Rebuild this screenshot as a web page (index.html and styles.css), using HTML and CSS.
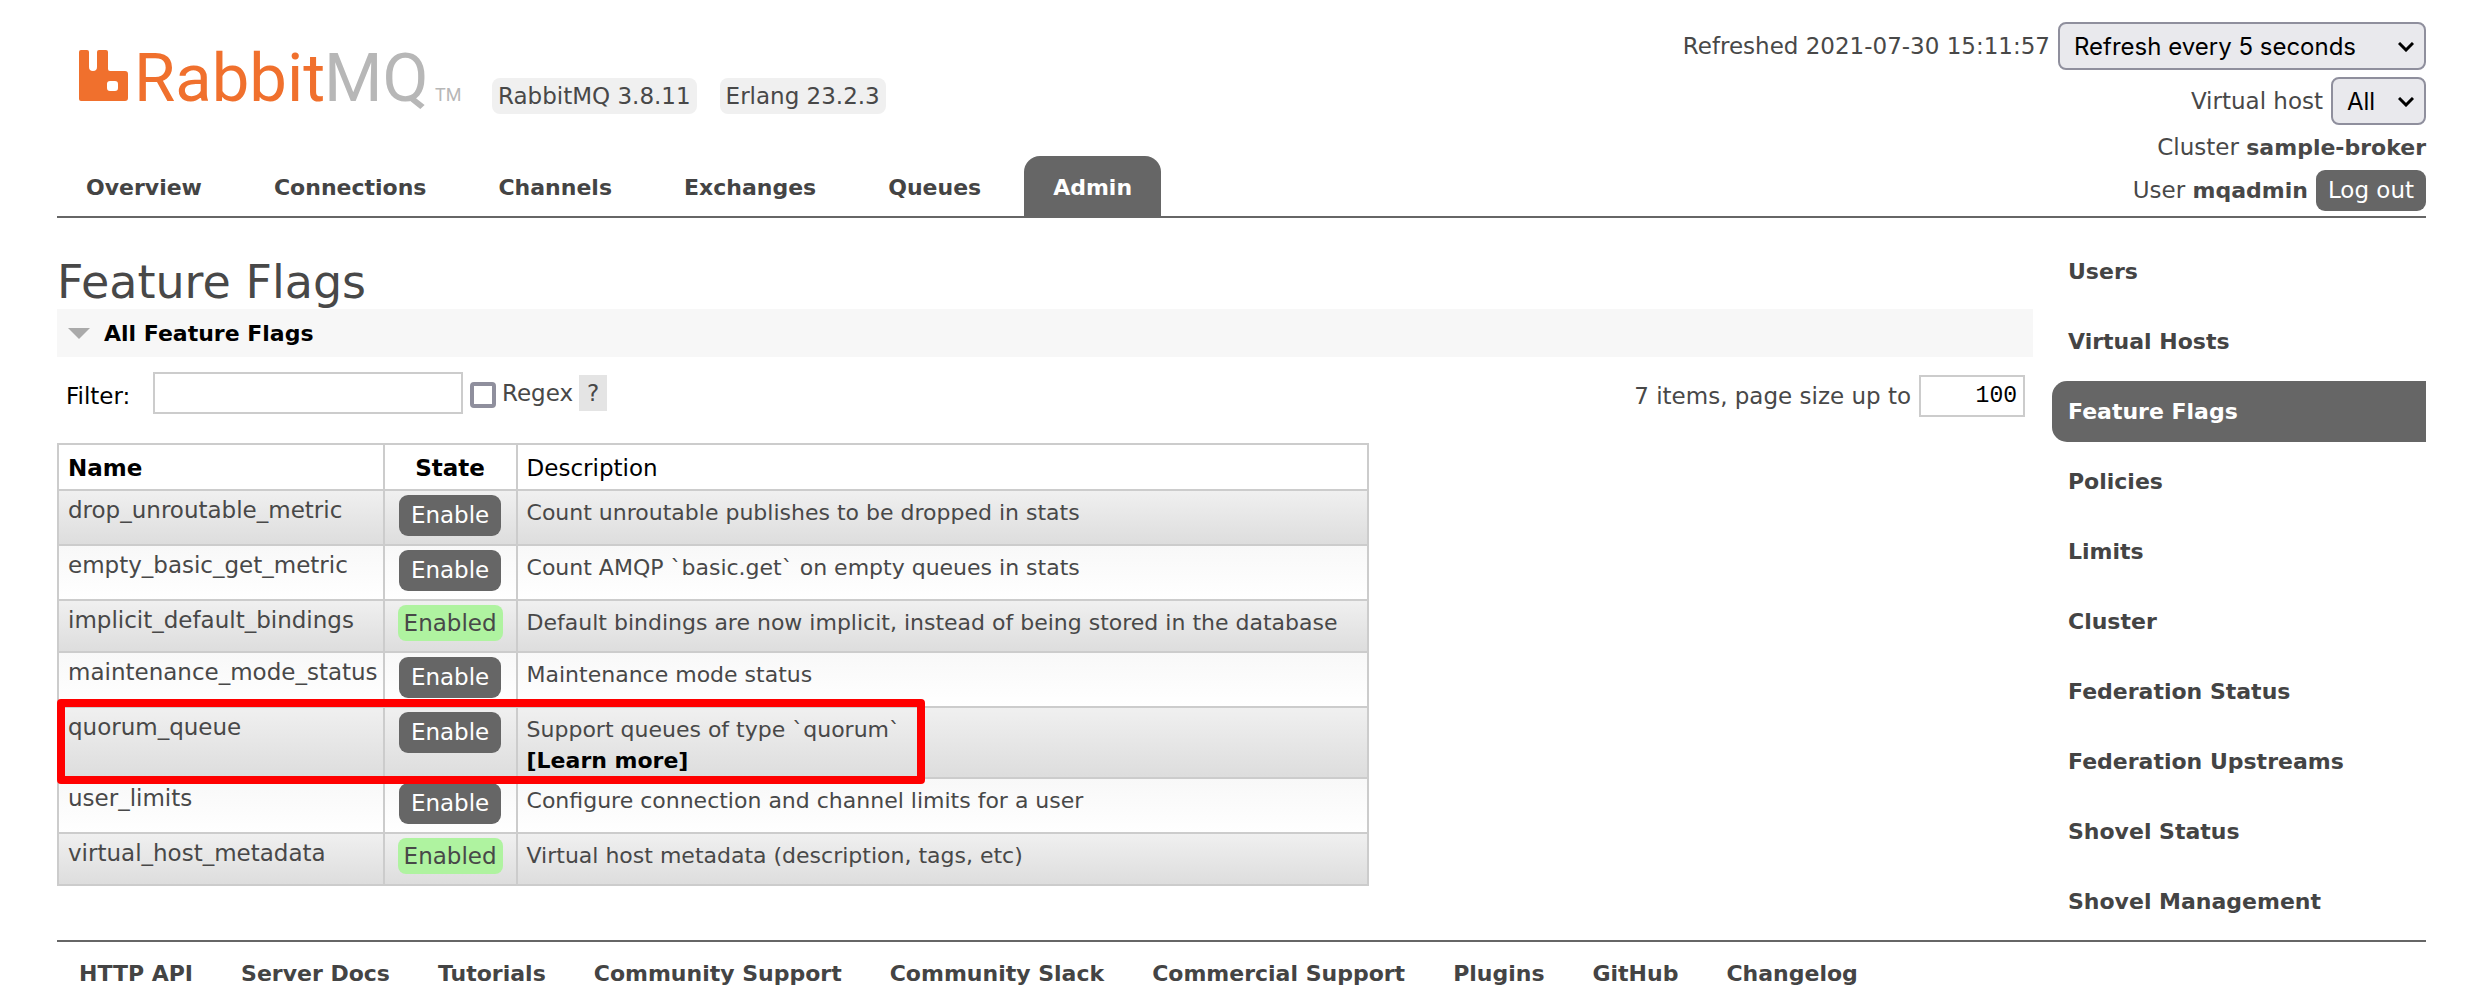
FILE: index.html
```
<!DOCTYPE html>
<html lang="en">
<head>
<meta charset="utf-8">
<meta name="viewport" content="width=device-width, initial-scale=1">
<title>RabbitMQ Management</title>
<link rel="stylesheet" href="styles.css">
</head>
<body>
<header class="header">
  <div class="header-left">
    <div class="brand">
      <a class="logo" href="#" aria-label="RabbitMQ">
        <svg width="386" height="80" viewBox="0 -8 386 80">
          <path fill="#f0702d" fill-rule="evenodd" d="M3 4h6q2 0 2 2v15q0 4 4 4q4 0 4-4V6q0-2 2-2h7q2 0 2 2v17q0 2 2 2h15q3 0 3 3v24q0 3-3 3H3q-2 0-2-2V6q0-2 2-2zM32 35q-3 0-3 3v4q0 3 3 3h5q3 0 3-3v-4q0-3-3-3z"/>
          <text class="logo-name" x="56" y="55">Rabbit</text>
          <text class="logo-name logo-mq" x="246" y="55">MQ</text>
          <text class="logo-tm" x="357" y="55">TM</text>
        </svg>
      </a>
      <span class="badge">RabbitMQ 3.8.11</span>
      <span class="badge">Erlang 23.2.3</span>
    </div>
    <nav class="tabs">
      <a class="tab" href="#">Overview</a>
      <a class="tab" href="#">Connections</a>
      <a class="tab" href="#">Channels</a>
      <a class="tab" href="#">Exchanges</a>
      <a class="tab" href="#">Queues</a>
      <a class="tab tab-current" href="#">Admin</a>
    </nav>
  </div>
  <div class="status">
    <div class="status-row">
      <label for="refresh">Refreshed 2021-07-30 15:11:57</label>
      <span class="picker picker-wide">
        <select id="refresh"><option>Refresh every 5 seconds</option></select>
        <svg class="chevron" width="16" height="10" viewBox="0 0 16 10"><path d="M1 1l7 7 7-7"/></svg>
      </span>
    </div>
    <div class="status-row">
      <label for="vhost">Virtual host</label>
      <span class="picker">
        <select id="vhost"><option>All</option></select>
        <svg class="chevron" width="16" height="10" viewBox="0 0 16 10"><path d="M1 1l7 7 7-7"/></svg>
      </span>
    </div>
    <div class="status-row status-cluster"><span>Cluster <b>sample-broker</b></span></div>
    <div class="status-row"><span>User <b>mqadmin</b></span><button class="button logout" type="button">Log out</button></div>
  </div>
</header>

<div class="body">
  <main class="main">
    <h1>Feature Flags</h1>
    <h2><svg width="22" height="11" viewBox="0 0 22 11"><path fill="#aaa" d="M0 0h22L11 11z"/></svg>All Feature Flags</h2>
    <div class="filter">
      <label class="filter-label" for="filter">Filter:</label>
      <input class="filter-input" id="filter" type="text">
      <input class="check" id="regex" type="checkbox">
      <label for="regex">Regex</label>
      <button class="help" type="button">?</button>
      <div class="paging">
        <label for="page-size">7 items, page size up to</label>
        <input class="page-size" id="page-size" type="text" value="100">
      </div>
    </div>
    <table class="flags">
      <thead>
        <tr><th>Name</th><th class="state">State</th><th class="plain">Description</th></tr>
      </thead>
      <tbody>
        <tr><td>drop_unroutable_metric</td><td class="state"><button class="button" type="button">Enable</button></td><td class="desc">Count unroutable publishes to be dropped in stats</td></tr>
        <tr><td>empty_basic_get_metric</td><td class="state"><button class="button" type="button">Enable</button></td><td class="desc">Count AMQP `basic.get` on empty queues in stats</td></tr>
        <tr><td>implicit_default_bindings</td><td class="state"><span class="badge badge-on">Enabled</span></td><td class="desc">Default bindings are now implicit, instead of being stored in the database</td></tr>
        <tr><td>maintenance_mode_status</td><td class="state"><button class="button" type="button">Enable</button></td><td class="desc">Maintenance mode status</td></tr>
        <tr class="marked"><td>quorum_queue<span class="marker"></span></td><td class="state"><button class="button" type="button">Enable</button></td><td class="desc">Support queues of type `quorum`<br><a class="learn" href="#">[Learn more]</a></td></tr>
        <tr><td>user_limits</td><td class="state"><button class="button" type="button">Enable</button></td><td class="desc">Configure connection and channel limits for a user</td></tr>
        <tr><td>virtual_host_metadata</td><td class="state"><span class="badge badge-on">Enabled</span></td><td class="desc">Virtual host metadata (description, tags, etc)</td></tr>
      </tbody>
    </table>
  </main>
  <nav class="side">
    <a href="#">Users</a>
    <a href="#">Virtual Hosts</a>
    <a class="side-current" href="#">Feature Flags</a>
    <a href="#">Policies</a>
    <a href="#">Limits</a>
    <a href="#">Cluster</a>
    <a href="#">Federation Status</a>
    <a href="#">Federation Upstreams</a>
    <a href="#">Shovel Status</a>
    <a href="#">Shovel Management</a>
  </nav>
</div>

<footer class="footer">
  <a href="#">HTTP API</a>
  <a href="#">Server Docs</a>
  <a href="#">Tutorials</a>
  <a href="#">Community Support</a>
  <a href="#">Community Slack</a>
  <a href="#">Commercial Support</a>
  <a href="#">Plugins</a>
  <a href="#">GitHub</a>
  <a href="#">Changelog</a>
</footer>
</body>
</html>
```
FILE: styles.css
```
* { box-sizing: border-box; }

body {
  margin: 0;
  padding: 22px 44px 0 57px;
  background: #fff;
  color: #484848;
  font: 23px/31px Verdana, "DejaVu Sans", sans-serif;
}

a { color: #444; font-size: 22px; font-weight: bold; text-decoration: none; }
button, input, select { font: inherit; margin: 0; }

/* Header */
.header {
  display: flex;
  justify-content: space-between;
  border-bottom: 2px solid #666;
}
.header-left {
  display: flex;
  flex-direction: column;
  justify-content: space-between;
}
.brand {
  display: flex;
  align-items: flex-end;
  padding: 16px 0 0 21px;
}
.brand .badge { margin: 0 23px 4px 0; }
.logo { display: flex; margin-right: 28px; }
.logo-name {
  fill: #f0702d;
  font: 400 67px Roboto, sans-serif;
}
.logo-mq { fill: #b7b7b7; }
.logo-tm { fill: #b7b7b7; font: 400 18px Roboto, sans-serif; }
.badge {
  display: inline-block;
  padding: 3px 6px 2px;
  border-radius: 8px;
  background: #f0f0f0;
}
.badge-on {
  margin-bottom: 2px;
  background: #aff3a0;
}

.tabs { display: flex; gap: 14px; }
.tab {
  padding: 16px 29px 13px;
  border-radius: 16px 16px 0 0;
}
.tab-current { background: #666; color: #fff; }

.status { display: flex; flex-direction: column; gap: 7px; padding-bottom: 5px; }
.status-row {
  display: flex;
  justify-content: flex-end;
  align-items: center;
  gap: 8px;
}
.status-cluster { line-height: 30px; }
.status b { font-size: 22px; }
.picker { position: relative; display: flex; }
.picker select {
  appearance: none;
  height: 48px;
  padding: 0 48px 0 14px;
  border: 2px solid #8f8f9d;
  border-radius: 8px;
  background: #e9e9ed;
  color: #000;
  font-family: Inter, sans-serif;
  font-size: 24px;
}
.picker-wide select { width: 368px; }
.chevron {
  position: absolute;
  right: 12px;
  top: 20px;
  fill: none;
  stroke: #000;
  stroke-width: 3;
  pointer-events: none;
}
.button {
  display: inline-block;
  padding: 5px 12px;
  border: 0;
  border-radius: 9px;
  background: #666;
  color: #fff;
}
.flags .button, .flags .badge { vertical-align: top; }

/* Content */
.body { display: flex; gap: 19px; }
.main { flex: 1; padding-top: 38px; }
h1 {
  margin: 0;
  font-size: 46px;
  font-weight: normal;
  line-height: 53px;
}
h2 {
  display: flex;
  align-items: center;
  gap: 14px;
  margin: 0;
  padding: 9px 11px 8px;
  background: #f7f7f7;
  color: #000;
  font-size: 22px;
}
.filter {
  display: flex;
  align-items: center;
  padding: 12px 8px 26px 9px;
}
.filter-label { width: 87px; padding-top: 6px; color: #000; }
.filter-input, .page-size {
  height: 42px;
  border: 2px solid #ccc;
  background: #fff;
}
.filter-input { width: 310px; margin-right: 7px; }
.check {
  appearance: none;
  width: 26px;
  height: 26px;
  margin: 4px 6px 0 0;
  border: 4px solid #8f8f9d;
  border-radius: 4px;
}
.help {
  margin-left: 6px;
  padding: 3px 8px 2px;
  border: 0;
  background: #e4e4e4;
  color: #484848;
}
.paging {
  display: flex;
  align-items: center;
  gap: 8px;
  margin-left: auto;
  padding-top: 6px;
}
.page-size {
  width: 106px;
  padding: 0 6px;
  color: #000;
  font-family: "Liberation Mono", monospace;
  text-align: right;
}

.flags { border-collapse: collapse; }
.flags th, .flags td {
  padding: 4px 5px 1px 9px;
  border: 2px solid #ccc;
  text-align: left;
  vertical-align: top;
}
.flags th { padding: 8px 5px 5px 9px; color: #000; }
.flags .plain { width: 851px; font-weight: normal; }
.flags th.state { padding: 8px 0 5px; text-align: center; }
.flags td.state { padding: 4px 13px 8px; text-align: center; }
.flags .desc { padding-top: 6px; font-size: 22px; }
.flags tbody tr:nth-child(odd) { background: linear-gradient(#f0f0f0, #ddd); }
.flags tbody tr:nth-child(even) { background: linear-gradient(#f8f8f8, #fff); }
.learn { color: #000; }

/* Highlight frame over the quorum queue row */
.marked td:first-child { position: relative; }
.marker {
  position: absolute;
  left: -2px;
  top: -9px;
  width: 868px;
  height: 85px;
  border: 8px solid #f00;
  border-radius: 4px;
  pointer-events: none;
}

.side {
  display: flex;
  flex-direction: column;
  gap: 9px;
  width: 374px;
  padding-top: 23px;
}
.side a {
  padding: 15px 16px;
  border-radius: 15px 0 0 15px;
}
.side .side-current { background: #666; color: #fff; }

.footer {
  display: flex;
  gap: 48px;
  margin-top: 8px;
  padding: 16px 22px 0;
  border-top: 2px solid #666;
}
```
